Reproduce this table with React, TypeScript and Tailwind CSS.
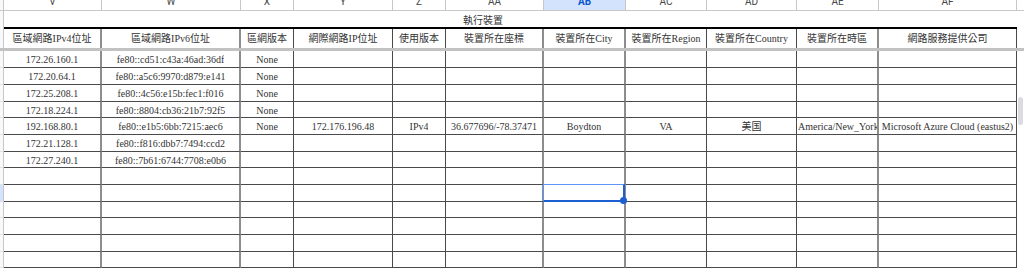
import React from "react";

type Col = { key: string; w: string; line: string; align?: "left" };

const thin = "border-r border-r-[#4a4a4a]";
const soft = "border-r-2 border-r-[#8d8d8d]";

const cols: Col[] = [
  { key: "V", w: "w-[98px]", line: soft },
  { key: "W", w: "w-[139px]", line: soft },
  { key: "X", w: "w-[53px]", line: thin },
  { key: "Y", w: "w-[99px]", line: thin },
  { key: "Z", w: "w-[53px]", line: thin },
  { key: "AA", w: "w-[98px]", line: soft },
  { key: "AB", w: "w-[82px]", line: soft },
  { key: "AC", w: "w-[81px]", line: thin },
  { key: "AD", w: "w-[90px]", line: thin },
  { key: "AE", w: "w-[82px]", line: soft, align: "left" },
  { key: "AF", w: "w-[138px]", line: thin },
];

const headers = [
  "區域網路IPv4位址",
  "區域網路IPv6位址",
  "區網版本",
  "網際網路IP位址",
  "使用版本",
  "裝置所在座標",
  "裝置所在City",
  "裝置所在Region",
  "裝置所在Country",
  "裝置所在時區",
  "網路服務提供公司",
];

const filled: string[][] = [
  ["172.26.160.1", "fe80::cd51:c43a:46ad:36df", "None"],
  ["172.20.64.1", "fe80::a5c6:9970:d879:e141", "None"],
  ["172.25.208.1", "fe80::4c56:e15b:fec1:f016", "None"],
  ["172.18.224.1", "fe80::8804:cb36:21b7:92f5", "None"],
  [
    "192.168.80.1",
    "fe80::e1b5:6bb:7215:aec6",
    "None",
    "172.176.196.48",
    "IPv4",
    "36.677696/-78.37471",
    "Boydton",
    "VA",
    "美国",
    "America/New_York",
    "Microsoft Azure Cloud (eastus2)",
  ],
  ["172.21.128.1", "fe80::f816:dbb7:7494:ccd2"],
  ["172.27.240.1", "fe80::7b61:6744:7708:e0b6"],
];

const rows: string[][] = Array.from({ length: 13 }, (_, i) => filled[i] ?? []);

const SELECTED_ROW = 8;
const SELECTED_COL = 6;

function ColumnLetters() {
  return (
    <div className="flex h-[11px] overflow-hidden border-b border-b-[#c7c7c7] bg-white">
      <div className="w-[4px] shrink-0 border-r border-r-[#c7c7c7] bg-[#f8f9fa]" />
      {cols.map((c, i) => (
        <div
          key={c.key}
          className={`${c.w} shrink-0 border-r border-r-[#c7c7c7] ${
            i === SELECTED_COL ? "bg-[#d3e3fd] font-bold text-[#0b57d0]" : "text-[#444746]"
          }`}
        >
          <div className="mt-[-8px] flex h-[19px] items-center justify-center text-[10px] font-['Roboto',sans-serif]">
            {c.key}
          </div>
        </div>
      ))}
    </div>
  );
}

export default function App() {
  return (
    <div className="relative h-[270px] w-[1024px] overflow-hidden bg-white font-['Liberation_Serif','Noto_Sans_CJK_TC',serif] text-[#333333]">
      <ColumnLetters />

      <div className="flex h-[18px]">
        <div className="w-[4px] shrink-0 border-r border-r-[#c7c7c7] bg-[#f8f9fa]" />
        <div className="flex w-[1013px] shrink-0 border-b-2 border-b-black">
          <div className="w-[958px] pt-[3px] text-center text-[10px] leading-[13px]">執行裝置</div>
        </div>
      </div>

      <div className="flex h-[19px]">
        <div className="w-[4px] shrink-0 border-r border-r-[#c7c7c7] bg-[#f8f9fa]" />
        {cols.map((c, i) => (
          <div
            key={c.key}
            className={`${c.w} ${c.line} flex shrink-0 items-center justify-center overflow-hidden whitespace-nowrap text-[10px]`}
          >
            {headers[i]}
          </div>
        ))}
      </div>
      <div className="h-[3px] w-full bg-[#c2c2c2]" />

      {rows.map((r, ri) => (
        <div key={ri} className={`flex ${ri > 0 && ri % 3 === 0 ? "h-[16px]" : "h-[17px]"}`}>
          <div
            className={`w-[4px] shrink-0 border-b border-r border-b-[#e1e1e1] border-r-[#c7c7c7] ${
              ri === SELECTED_ROW ? "bg-[#d3e3fd]" : "bg-[#f8f9fa]"
            }`}
          />
          {cols.map((c, ci) => (
            <div
              key={c.key}
              className={`${c.w} ${c.line} relative flex shrink-0 items-center border-b border-b-[#4a4a4a] ${
                c.align === "left" ? "justify-start pl-[1px]" : "justify-center"
              }`}
            >
              <span className="overflow-hidden whitespace-nowrap pt-[2px] text-[10px] leading-[12px]">
                {r[ci] ?? ""}
              </span>
              {ri === SELECTED_ROW && ci === SELECTED_COL ? (
                <div className="absolute -left-[1px] -top-[1px] -right-[1px] -bottom-[1px] z-10 border border-[#5b95f5] border-b-2 border-r-2 border-b-[#1b5fd1] border-r-[#1b5fd1]">
                  <div className="absolute -bottom-[4px] -right-[4px] h-[7px] w-[7px] rounded-full bg-[#1b5fd1]" />
                </div>
              ) : null}
            </div>
          ))}
        </div>
      ))}

      <div className="absolute left-[1018px] top-[97px] h-[28px] w-[5px] rounded-full bg-[#dadce0]" />
    </div>
  );
}
